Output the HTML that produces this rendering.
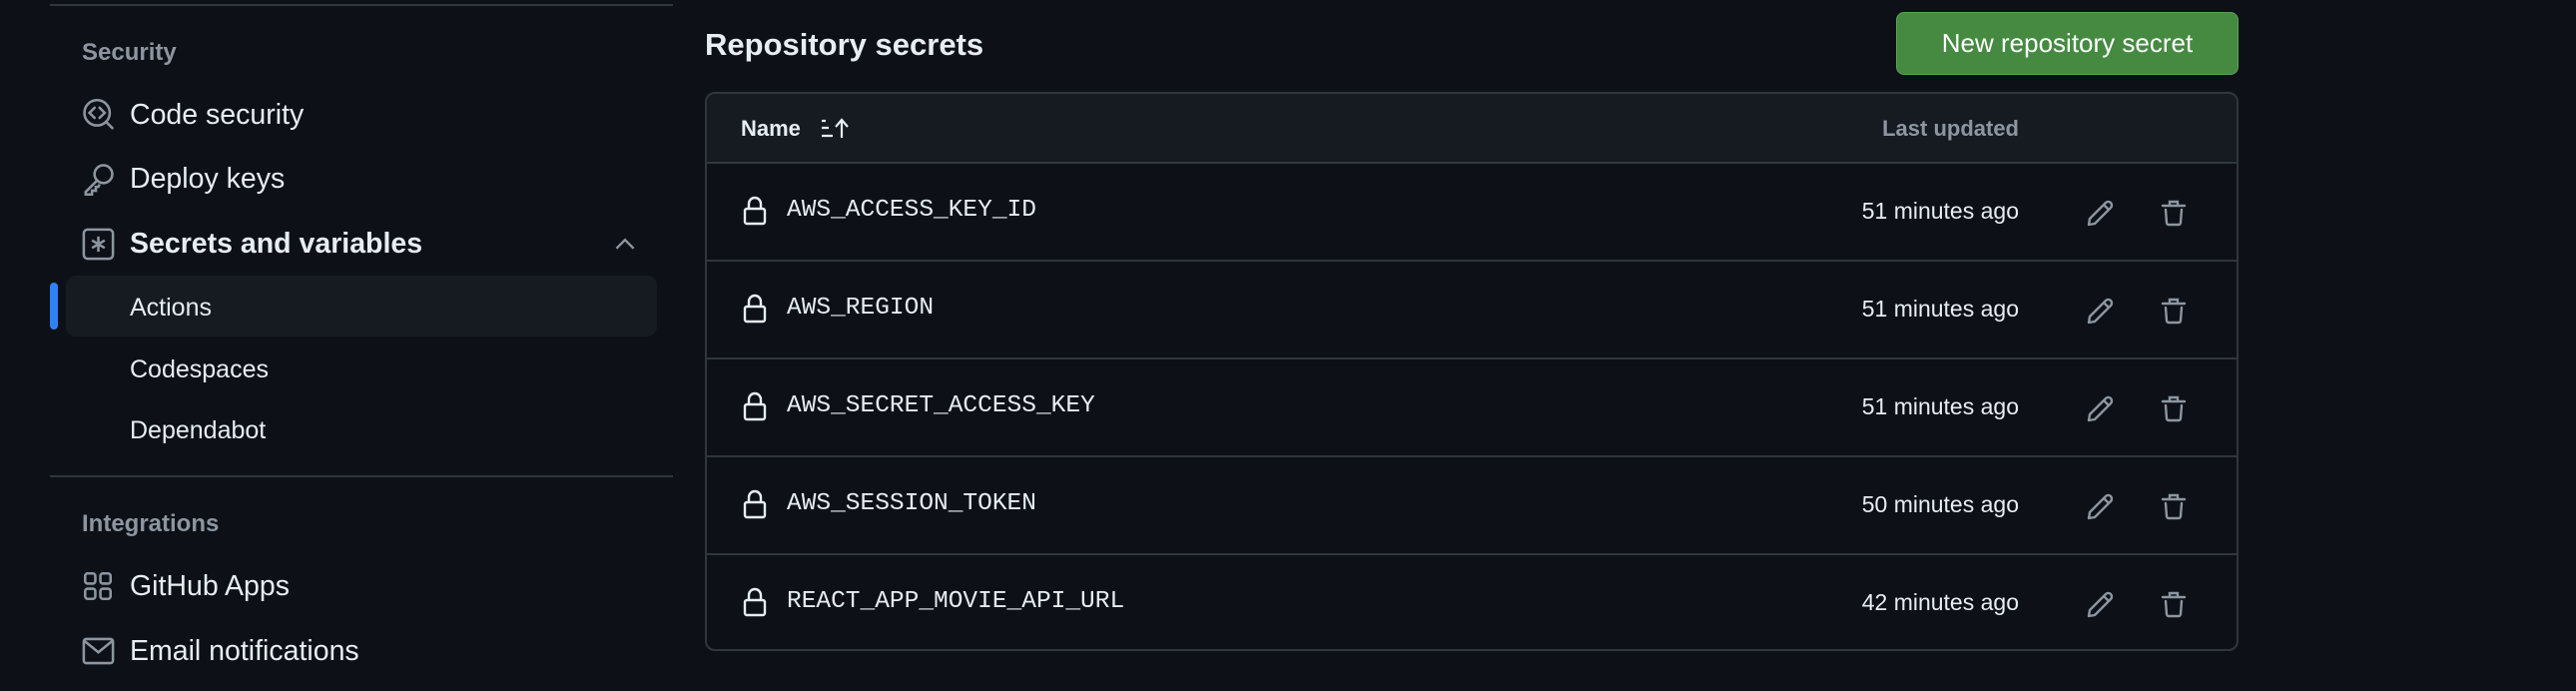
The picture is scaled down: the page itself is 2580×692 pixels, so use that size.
<!DOCTYPE html>
<html><head><meta charset="utf-8"><style>
*{margin:0;padding:0;box-sizing:border-box}
body{width:2580px;height:692px;background:#0d1117;font-family:"Liberation Sans",sans-serif;color:#e6edf3;position:relative;overflow:hidden}
.a{position:absolute;white-space:nowrap}
.hd{font-size:24px;font-weight:bold;color:#8d96a0;line-height:28px}
.nav{font-size:28.5px;line-height:34px}
.sub{font-size:25px;line-height:30px}
.ic{position:absolute}
.tbl{position:absolute;left:706px;top:92px;width:1536px;height:560px;border:2px solid #30363d;border-radius:10px;overflow:hidden}
.th{height:70px;background:#161b22;border-bottom:2px solid #30363d;position:relative}
.row{height:98px;border-bottom:2px solid #30363d;position:relative}
.row:last-child{border-bottom:none}
.nm{position:absolute;left:80px;top:33px;font-family:"Liberation Mono",monospace;font-size:24.5px;color:#e6edf3}
.tm{position:absolute;right:218px;top:34px;font-size:23px;color:#e6edf3}
</style></head><body>
<div class="a" style="left:50px;top:4px;width:624px;height:2px;background:#30363d"></div>
<div class="a hd" style="left:82px;top:39px">Security</div>
<svg class="ic" style="left:82px;top:99px" width="33" height="33" viewBox="0 0 26 26" fill="none" stroke="#8d96a0" stroke-width="2"><circle cx="12" cy="11" r="10"/><path d="M19 18l5 5M10 7l-4 4 4 4M14 7l4 4-4 4" stroke-linecap="round"/></svg>
<div class="a nav" style="left:130px;top:98px">Code security</div>
<svg class="ic" style="left:82px;top:163px" width="33" height="33" viewBox="0 0 26 26" fill="none" stroke="#8d96a0" stroke-width="2"><circle cx="17" cy="9" r="7"/><path d="M12 14L3 23v2h5v-3h3v-3h2l1-2"/></svg>
<div class="a nav" style="left:130px;top:162px">Deploy keys</div>
<svg class="ic" style="left:82px;top:228px" width="33" height="33" viewBox="0 0 26 26" fill="none" stroke="#8d96a0" stroke-width="2"><rect x="1.5" y="1.5" width="23" height="23" rx="3"/><path d="M13 7v12M8 10l10 6M18 10l-10 6"/></svg>
<div class="a nav" style="left:130px;top:227px;font-weight:bold">Secrets and variables</div>
<svg class="ic" style="left:615px;top:237px" width="22" height="15" viewBox="0 0 20 14" fill="none" stroke="#8d96a0" stroke-width="2.2"><path d="M2 11l8-8 8 8"/></svg>
<div class="a" style="left:66px;top:276px;width:592px;height:61px;background:#161b22;border-radius:10px"></div>
<div class="a" style="left:50px;top:283px;width:8px;height:47px;background:#2f81f7;border-radius:4px"></div>
<div class="a sub" style="left:130px;top:293px">Actions</div>
<div class="a sub" style="left:130px;top:355px">Codespaces</div>
<div class="a sub" style="left:130px;top:416px">Dependabot</div>
<div class="a" style="left:50px;top:476px;width:624px;height:2px;background:#30363d"></div>
<div class="a hd" style="left:82px;top:511px">Integrations</div>
<svg class="ic" style="left:84px;top:573px" width="28" height="28" viewBox="0 0 22 22" fill="none" stroke="#8d96a0" stroke-width="2"><rect x="1" y="1" width="8" height="8" rx="2"/><rect x="13" y="1" width="8" height="8" rx="2"/><rect x="1" y="13" width="8" height="8" rx="2"/><rect x="13" y="13" width="8" height="8" rx="2"/></svg>
<div class="a nav" style="left:130px;top:570px">GitHub Apps</div>
<svg class="ic" style="left:82px;top:638px" width="33" height="28" viewBox="0 0 26 22" fill="none" stroke="#8d96a0" stroke-width="2"><rect x="1.5" y="1.5" width="23" height="19" rx="2"/><path d="M2 3l11 9 11-9"/></svg>
<div class="a nav" style="left:130px;top:635px">Email notifications</div>

<div class="a" style="left:706px;top:27px;font-size:31px;font-weight:bold">Repository secrets</div>
<div class="a" style="left:1899px;top:12px;width:343px;height:63px;background:#468a42;border:1px solid #58a052;border-radius:8px;font-size:26px;color:#fff;text-align:center;line-height:61px">New repository secret</div>

<div class="tbl">
<div class="th">
<div class="a" style="left:34px;top:22px;font-size:22px;font-weight:bold">Name</div>
<svg class="ic" style="left:114px;top:24px" width="28" height="22" viewBox="0 0 28 22" fill="none" stroke="#e6edf3" stroke-width="2.2"><path d="M1 3h4M1 10h7M1 18h11M21 20V3M15 9l6-7 6 7"/></svg>
<div class="a" style="right:218px;top:22px;font-size:22px;font-weight:bold;color:#8d96a0">Last updated</div>
</div>
<div class="row"></div><div class="row"></div><div class="row"></div><div class="row"></div><div class="row"></div>
</div>
<script>
var d=[["AWS_ACCESS_KEY_ID","51"],["AWS_REGION","51"],["AWS_SECRET_ACCESS_KEY","51"],["AWS_SESSION_TOKEN","50"],["REACT_APP_MOVIE_API_URL","42"]];
var rows=document.querySelectorAll('.row');
d.forEach(function(r,i){rows[i].innerHTML='<svg class="ic" style="left:36px;top:32px" width="24" height="30" viewBox="0 0 24 30" fill="none" stroke="#e6edf3" stroke-width="2.4"><path d="M6 13V8a6 6 0 0 1 12 0v5"/><rect x="2" y="13" width="20" height="15" rx="2"/></svg><div class="nm">'+r[0]+'</div><div class="tm">'+r[1]+' minutes ago</div><svg class="ic" style="left:1381px;top:34px" width="30" height="30" viewBox="0 0 30 30" fill="none" stroke="#8d96a0" stroke-width="2.4" stroke-linejoin="round"><path d="M3 27l1-6L20 5a3 3 0 0 1 5 5L9 26z M18 7l5 5"/></svg><svg class="ic" style="left:1456px;top:34px" width="26" height="30" viewBox="0 0 26 30" fill="none" stroke="#8d96a0" stroke-width="2.4" stroke-linecap="round"><path d="M2 8h22M9 8V4h8v4M5 12l1 13a2 2 0 0 0 2 2h10a2 2 0 0 0 2-2l1-13"/></svg>';});
</script>
</body></html>
